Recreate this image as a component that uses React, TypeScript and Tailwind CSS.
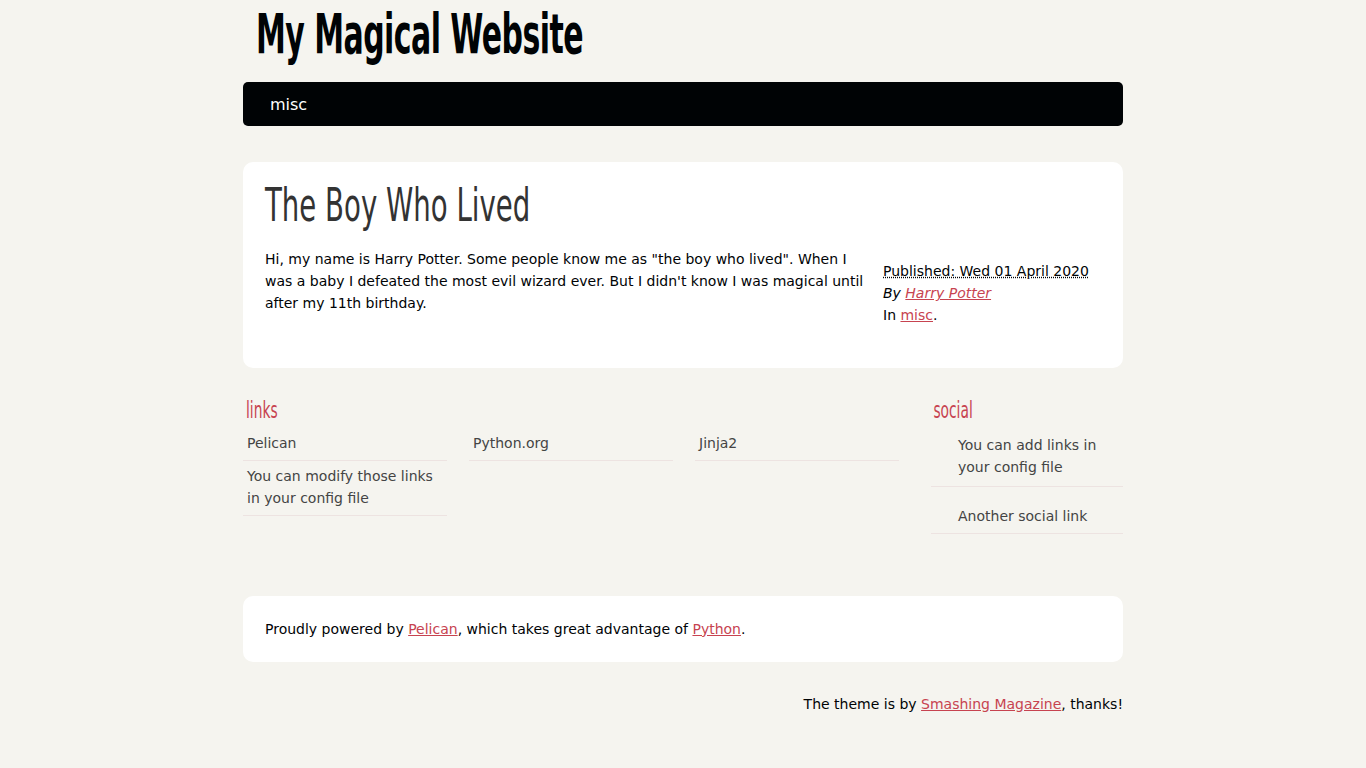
const body = { fontFamily: '"DejaVu Sans", "Open Sans", sans-serif' };
const head = { fontFamily: '"DejaVu Sans", sans-serif' };

const links = ['Pelican', 'Python.org', 'Jinja2', 'You can modify those links in your config file'];

const App = () => {
	return (
		<div className="min-h-[768px] bg-[#f5f4ef] text-[#000305]" style={body}>
			<div className="mx-auto w-[880px] pb-[56px]">
				<header className="h-[82px] pl-[13px] pt-[4px]">
					<h1
						className="inline-block origin-left scale-x-[0.545] whitespace-nowrap text-[55px] font-bold leading-[60px] tracking-[-1px] text-[#000305]"
						style={head}
					>
						My Magical Website
					</h1>
				</header>

				<nav className="flex h-[44px] items-center rounded-[5px] bg-[#000305] pl-[27px] pt-[2px] text-[16px] text-white">
					misc
				</nav>

				<section className="mt-[36px] rounded-[10px] bg-white px-[22px] pb-[42px] pt-[16px]">
					<h2
						className="inline-block origin-left scale-x-[0.6] whitespace-nowrap text-[46px] leading-[54px] text-[#333]"
						style={head}
					>
						The Boy Who Lived
					</h2>
					<div className="mt-[16px] flex justify-between">
						<p className="w-[600px] text-[14px] leading-[22px] text-[#000305]">
							Hi, my name is Harry Potter. Some people know me as "the boy who
							lived". When I was a baby I defeated the most evil wizard ever. But
							I didn't know I was magical until after my 11th birthday.
						</p>
						<div className="mt-[12px] w-[218px] text-[14px] leading-[22px]">
							<abbr className="underline decoration-dotted" title="2020-04-01">
								Published: Wed 01 April 2020
							</abbr>
							<div className="italic">
								By <a className="text-[#c74350] underline">Harry Potter</a>
							</div>
							<div>
								In <a className="text-[#c74350] underline">misc</a>.
							</div>
						</div>
					</div>
				</section>

				<section className="mt-[28px] flex justify-between">
					<div className="w-[656px]">
						<h3
							className="inline-block origin-left scale-x-[0.6] pl-[5px] text-[23px] leading-[28px] text-[#c74350]"
							style={head}
						>
							links
						</h3>
						<ul className="mt-[3px] grid grid-cols-[204px_204px_204px] gap-x-[22px] text-[14px] leading-[22px] text-[#444]">
							{links.map((l) => (
								<li key={l} className="border-b border-[#ede3e1] px-[4px] pb-[6px] pt-[4px]">
									{l}
								</li>
							))}
						</ul>
					</div>
					<div className="w-[192px]">
						<h3
							className="inline-block origin-left scale-x-[0.6] pl-[4px] text-[23px] leading-[28px] text-[#c74350]"
							style={head}
						>
							social
						</h3>
						<ul className="mt-[3px] text-[14px] leading-[22px] text-[#444]">
							<li className="border-b border-[#ede3e1] pb-[8px] pl-[27px] pt-[6px]">
								You can add links in your config file
							</li>
							<li className="border-b border-[#ede3e1] pb-[6px] pl-[27px] pt-[18px]">
								Another social link
							</li>
						</ul>
					</div>
				</section>

				<footer className="mt-[62px] flex h-[66px] items-center rounded-[10px] bg-white px-[22px] text-[14px]">
					<p>
						Proudly powered by <a className="text-[#c74350] underline">Pelican</a>,
						which takes great advantage of{' '}
						<a className="text-[#c74350] underline">Python</a>.
					</p>
				</footer>

				<p className="mt-[32px] text-right text-[14px]">
					The theme is by{' '}
					<a className="text-[#c74350] underline">Smashing Magazine</a>, thanks!
				</p>
			</div>
		</div>
	);
};

export default App;
